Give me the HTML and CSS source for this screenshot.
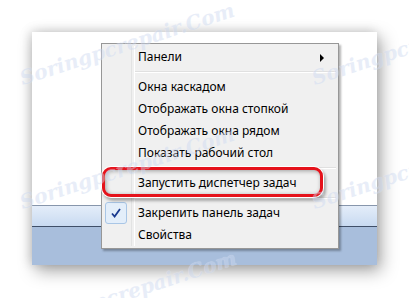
FILE: index.html
```html
<!DOCTYPE html>
<html lang="ru">
<head>
    <meta charset="UTF-8">
    <title>Панель задач</title>
    <link rel="stylesheet" href="styles.css">
</head>
<body>
    <div class="desk">
        <div class="window">
            <div class="window-body"></div>
            <div class="taskbar">
                <div class="taskbar-glass"></div>
                <div class="taskbar-fill"></div>
            </div>
        </div>

        <ul class="menu">
            <li class="menu-item">Панели <span class="arrow"></span></li>
            <li class="menu-sep"></li>
            <li class="menu-item">Окна каскадом</li>
            <li class="menu-item">Отображать окна стопкой</li>
            <li class="menu-item">Отображать окна рядом</li>
            <li class="menu-item">Показать рабочий стол</li>
            <li class="menu-sep"></li>
            <li class="menu-item">Запустить диспетчер задач</li>
            <li class="menu-sep"></li>
            <li class="menu-item checked">
                <span class="check">
                    <svg width="12" height="12" viewBox="0 0 12 12"><path d="M2 6.5 L4.6 9.5 L10 2" fill="none" stroke="#1a3a8f" stroke-width="1.8"/></svg>
                </span>
                Закрепить панель задач
            </li>
            <li class="menu-item">Свойства</li>
        </ul>

        <div class="highlight"></div>

        <span class="mark mark-1">Soringpcrepair.Com</span>
        <span class="mark mark-2">Soringpcrepair.Com</span>
        <span class="mark mark-3">Soringpcrepair.Com</span>
        <span class="mark mark-4">Soringpcrepair.Com</span>
        <span class="mark mark-5">Soringpcrepair.Com</span>
    </div>
</body>
</html>
```

FILE: styles.css
```css
* {
    margin: 0;
    padding: 0;
    box-sizing: border-box;
}

body {
    font-family: 'Noto Sans', 'Liberation Sans', sans-serif;
    background-color: #fff;
    color: #000;
}

.desk {
    position: relative;
    width: 409px;
    height: 298px;
    overflow: hidden;
    padding: 32px 0 0 32px;
}

.window {
    width: 345px;
    height: 233px;
    display: flex;
    flex-direction: column;
    box-shadow: 4px 6px 16px rgba(0, 0, 0, 0.35), -2px -1px 10px rgba(0, 0, 0, 0.15);
}

.window-body {
    height: 173px;
    background-color: #fff;
}

.taskbar {
    flex: 1;
    display: flex;
    flex-direction: column;
    border-top: 1px solid #8796ac;
}

.taskbar-glass {
    height: 21px;
    background: linear-gradient(#e4edf9, #c8daf1);
    border-bottom: 1px solid #3f4f68;
}

.taskbar-fill {
    flex: 1;
    background-color: #a8bedc;
}

.menu {
    position: absolute;
    left: 101px;
    top: 43px;
    width: 238px;
    list-style: none;
    background-color: #f0f0f0;
    border: 1px solid #979797;
    box-shadow: 2px 2px 2px rgba(0, 0, 0, 0.3);
    padding: 2px;
    font-size: 12px;
}

.menu::before {
    content: '';
    position: absolute;
    left: 29px;
    top: 2px;
    bottom: 2px;
    width: 2px;
    border-left: 1px solid #e2e3e3;
    box-shadow: 1px 0 0 #fff;
}

.menu-item {
    position: relative;
    height: 22px;
    line-height: 22px;
    padding-left: 34px;
    display: flex;
    align-items: center;
}

.arrow {
    position: absolute;
    right: 12px;
    top: 8px;
    width: 0;
    height: 0;
    border-left: 4px solid #000;
    border-top: 4px solid transparent;
    border-bottom: 4px solid transparent;
}

.menu-sep {
    height: 2px;
    margin: 3px 0 3px 30px;
    border-top: 1px solid #e0e0e0;
    border-bottom: 1px solid #fff;
}

.check {
    position: absolute;
    left: 1px;
    top: 0;
    width: 22px;
    height: 22px;
    border: 1px solid #a9c6e6;
    border-radius: 3px;
    background-color: #e3eefa;
    display: flex;
    align-items: center;
    justify-content: center;
}

.highlight {
    position: absolute;
    left: 102px;
    top: 167px;
    width: 221px;
    height: 30px;
    border: 3px solid #e5121b;
    border-radius: 9px;
    box-shadow: 0 0 0 1px #fff, 2px 3px 3px 1px rgba(0, 0, 0, 0.3), inset 1px 1px 4px rgba(0, 0, 0, 0.35);
}

.mark {
    position: absolute;
    font-family: 'DejaVu Serif', serif;
    font-style: italic;
    font-weight: bold;
    font-size: 20px;
    color: #cdd9f0;
    opacity: 0.45;
    white-space: nowrap;
    transform: rotate(-18deg);
    transform-origin: left bottom;
    text-shadow: 0 0 1px #fff;
}

.mark-1 { left: 24px; top: 66px; }
.mark-2 { left: 316px; top: 66px; }
.mark-3 { left: 24px; top: 190px; }
.mark-4 { left: 316px; top: 190px; }
.mark-5 { left: 26px; top: 314px; }
```
